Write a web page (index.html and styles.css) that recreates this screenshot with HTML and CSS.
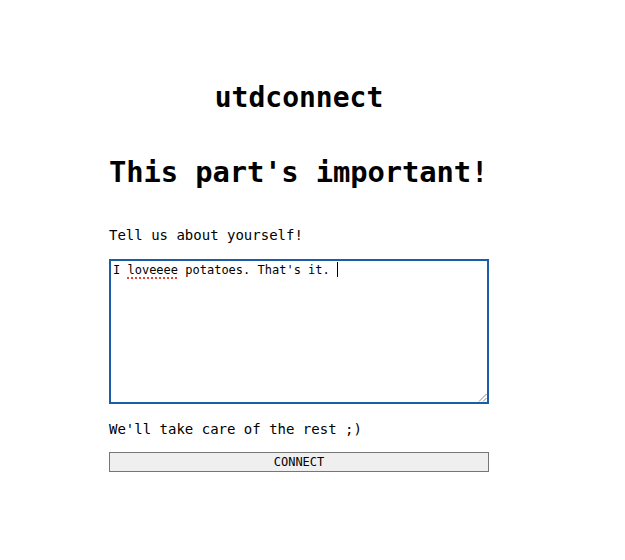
FILE: index.html
```html
<!DOCTYPE html>
<html lang="en">
<head>
<meta charset="utf-8">
<title>utdconnect</title>
<link rel="stylesheet" href="styles.css">
</head>
<body>
<main class="page">
  <h1 class="title">utdconnect</h1>
  <h2 class="heading">This part's important!</h2>
  <p class="intro">Tell us about yourself!</p>
  <div class="box" role="textbox" aria-multiline="true">
    <span class="line">I <span class="typo">loveeee</span> potatoes. That's it. <span class="caret"></span></span>
    <svg class="grip" width="9" height="9" viewBox="0 0 9 9" aria-hidden="true">
      <line x1="8.5" y1="1" x2="1" y2="8.5" stroke="#8a8a8a" stroke-width="1"/>
      <line x1="8.5" y1="5" x2="5" y2="8.5" stroke="#8a8a8a" stroke-width="1"/>
    </svg>
  </div>
  <p class="note">We'll take care of the rest ;)</p>
  <button class="btn" type="button">CONNECT</button>
</main>
</body>
</html>
```

FILE: styles.css
```css
html, body {
  margin: 0;
  padding: 0;
  background: #ffffff;
}

body {
  font-family: "DejaVu Sans Mono", "Liberation Mono", monospace;
  color: #000000;
}

.page {
  display: flex;
  flex-direction: column;
  width: 380px;
  padding: 80px 0 0 109px;
}

.title {
  margin: 0;
  font-size: 28px;
  line-height: 36px;
  font-weight: 700;
  text-align: center;
}

.heading {
  margin: 39px 0 0;
  font-size: 28.8px;
  line-height: 34px;
  font-weight: 700;
  white-space: nowrap;
  letter-spacing: -0.1px;
}

.intro {
  margin: 36px 0 0;
  font-size: 14px;
  line-height: 20px;
}

.box {
  position: relative;
  margin-top: 14px;
  height: 145px;
  box-sizing: border-box;
  border: 2px solid #1b5ea7;
  padding: 1px 2px 2px 2px;
  font-size: 12px;
  line-height: 14px;
  font-family: "DejaVu Sans Mono", "Liberation Mono", monospace;
}

.line {
  white-space: pre;
}

.typo {
  text-decoration-line: underline;
  text-decoration-style: dotted;
  text-decoration-color: #e0443a;
  text-decoration-thickness: 2px;
  text-underline-offset: 3px;
}

.caret {
  display: inline-block;
  width: 1px;
  height: 15px;
  background: #000000;
  vertical-align: -3px;
}

.grip {
  position: absolute;
  right: 0;
  bottom: 0;
}

.note {
  margin: 14px 0 0;
  font-size: 14px;
  line-height: 22px;
}

.btn {
  margin-top: 12px;
  height: 20px;
  width: 380px;
  padding: 1px 0 0;
  box-sizing: border-box;
  background: #efefef;
  border: 1px solid #767676;
  border-radius: 0;
  font-family: "DejaVu Sans Mono", "Liberation Mono", monospace;
  font-size: 12px;
  line-height: 17px;
  color: #000000;
}
```
